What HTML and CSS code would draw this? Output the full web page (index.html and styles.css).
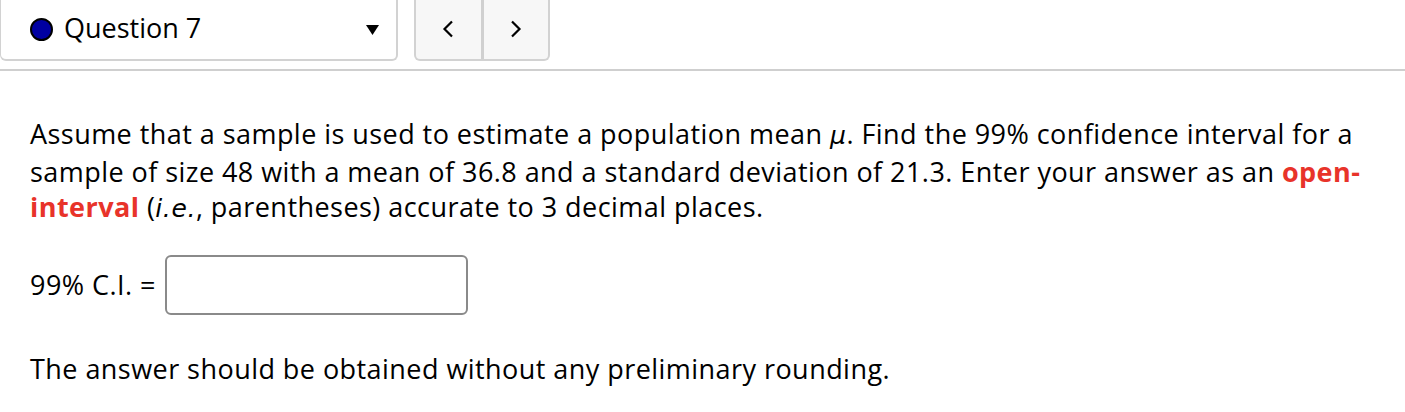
FILE: index.html
```html
<!DOCTYPE html>
<html>
<head>
<meta charset="utf-8">
<link rel="stylesheet" href="styles.css">
</head>
<body>
<div class="topbar">
  <div class="qselect">
    <span class="dot"></span>
    <span class="qlabel">Question 7</span>
    <svg class="caret" width="13" height="10" viewBox="0 0 13 10"><path d="M0 0 L13 0 L6.5 10 Z" fill="#000"/></svg>
  </div>
  <div class="nav">
    <span class="navbtn"><svg width="12" height="18" viewBox="0 0 12 18"><path d="M10 1.5 L2.5 9 L10 16.5" fill="none" stroke="#000" stroke-width="2.2"/></svg></span>
    <span class="navsep"></span>
    <span class="navbtn"><svg width="12" height="18" viewBox="0 0 12 18"><path d="M2 1.5 L9.5 9 L2 16.5" fill="none" stroke="#000" stroke-width="2.2"/></svg></span>
  </div>
</div>
<div class="rule"></div>
<div class="question">
  <p class="text">Assume that a sample is used to estimate a population mean <i class="math">μ</i>. Find the 99% confidence interval for a sample of size 48 with a mean of 36.8 and a standard deviation of 21.3. Enter your answer as an <b class="red">open-interval</b> (<i class="math">i.e.</i>, parentheses) accurate to 3 decimal places.</p>
  <div class="answer">
    <span class="label">99% C.I. =</span>
    <span class="input"></span>
  </div>
  <p class="text note">The answer should be obtained without any preliminary rounding.</p>
</div>
</body>
</html>
```

FILE: styles.css
```css
html, body {
  margin: 0;
  padding: 0;
  background: #fff;
  color: #000;
  font-family: "Open Sans", "Lato", sans-serif;
  font-variant-ligatures: none;
}

.topbar {
  display: flex;
  align-items: flex-start;
  gap: 16px;
  margin-top: -12px;
  height: 73px;
}

.qselect {
  box-sizing: border-box;
  width: 398px;
  height: 73px;
  border: 2px solid #d2d2d2;
  border-top: none;
  border-left-width: 1px;
  border-radius: 0 0 6px 6px;
  display: flex;
  align-items: center;
  padding: 8px 17px 0 29px;
  background: #fff;
}

.dot {
  box-sizing: border-box;
  width: 23px;
  height: 23px;
  border-radius: 50%;
  background: #0000a2;
  border: 2px solid #000;
  flex: none;
  margin-top: 4px;
}

.qlabel {
  font-size: 27px;
  margin-left: 11px;
  flex: 1;
  line-height: 1;
}

.caret {
  flex: none;
  margin-top: 4px;
}

.nav {
  box-sizing: border-box;
  width: 136px;
  height: 73px;
  border: 2px solid #d2d2d2;
  border-top: none;
  border-radius: 0 0 6px 6px;
  background: #f7f7f7;
  display: flex;
  padding-top: 10px;
}

.navbtn {
  flex: 1;
  display: flex;
  align-items: center;
  justify-content: center;
}

.navsep {
  width: 3px;
  background: #d0d0d0;
}

.rule {
  height: 2px;
  background: #cfcfcf;
  margin-top: 8px;
}

.question {
  padding: 0 30px;
  font-size: 27px;
  line-height: 35.5px;
  letter-spacing: 0.45px;
}

.text {
  margin: 0;
  max-width: 1346px;
}

.question > .text:first-child {
  margin-top: 45px;
}

.math {
  font-family: "DejaVu Sans", sans-serif;
  font-style: italic;
  font-size: 25px;
  letter-spacing: 0.6px;
}

.red {
  color: #e8332a;
  font-weight: bold;
}

.answer {
  display: flex;
  align-items: center;
  gap: 9px;
  margin-top: 28px;
}

.input {
  box-sizing: border-box;
  width: 303px;
  height: 60px;
  border: 2px solid #8a8a8a;
  border-radius: 6px;
  background: #fff;
}

.note {
  margin-top: 36px;
}
```
